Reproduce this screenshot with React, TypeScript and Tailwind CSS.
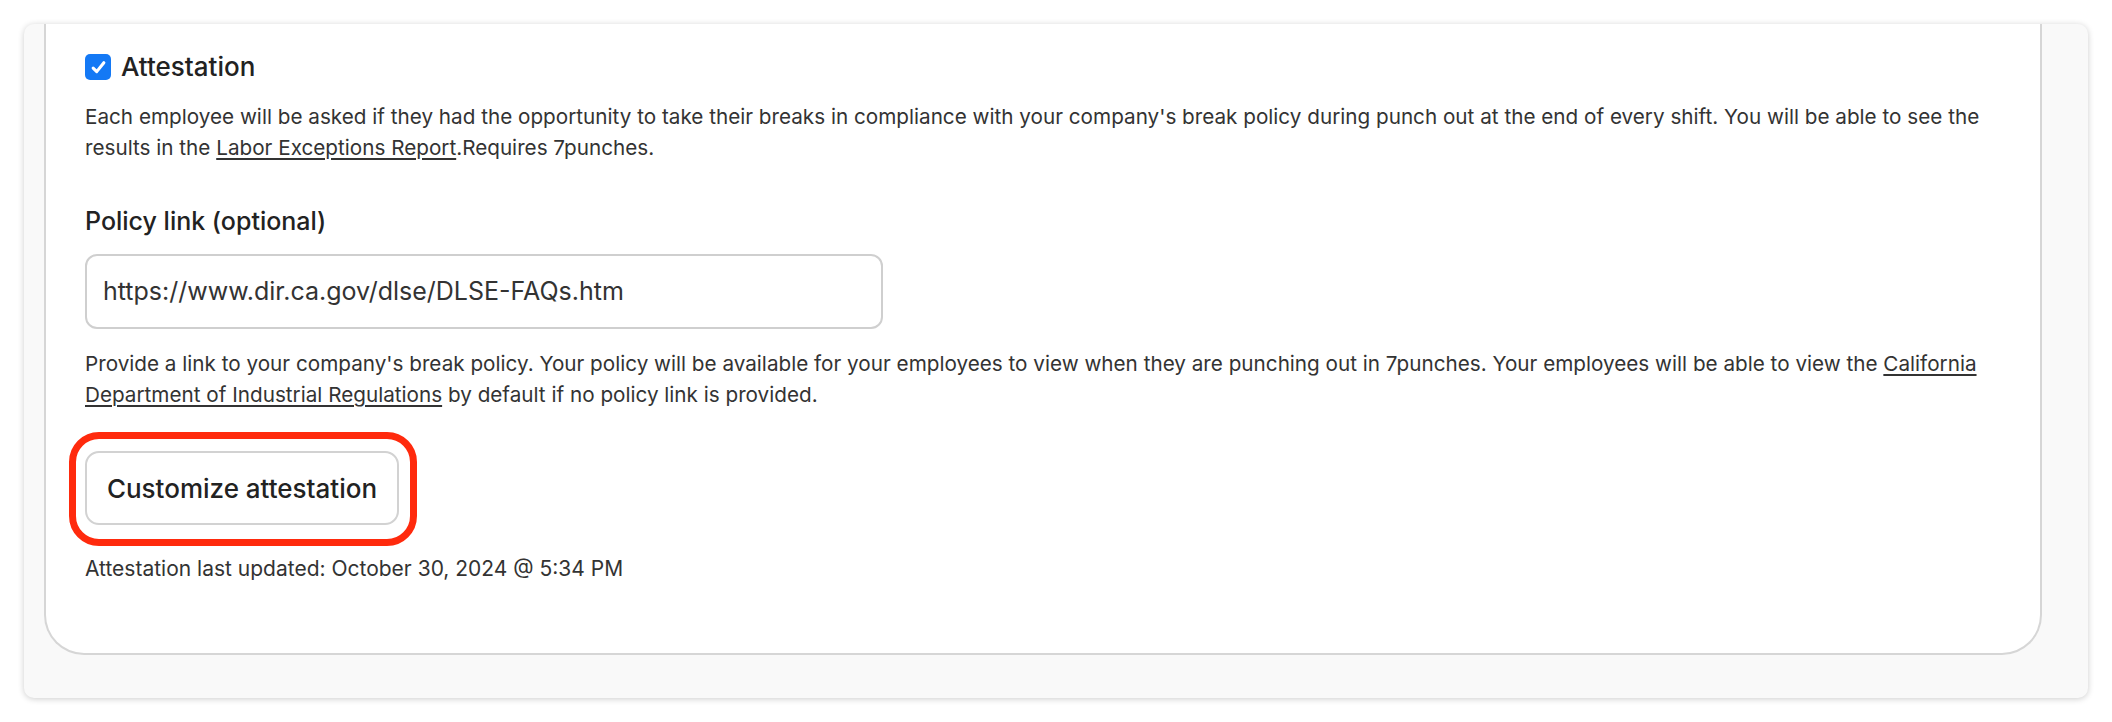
export default function App() {
  return (
    <div className="min-h-screen bg-white pt-[24px] px-[24px] font-['Inter',sans-serif] text-[#333]">
      {/* outer scroll panel, inner card scrolled so its top is hidden */}
      <div className="overflow-hidden rounded-[10px] bg-[#f9f9f9] pl-[20px] pr-[46px] pb-[43px] shadow-[0_1px_6px_rgba(0,0,0,0.2)]">
        <div className="rounded-b-[40px] border-x-2 border-b-2 border-[#d6d6d6] bg-white pt-[27px] pb-[69px] pl-[39px] pr-[39px]">
          {/* Attestation heading */}
          <label className="flex h-[32px] items-center gap-[10px]">
            <span className="flex h-[26px] w-[26px] items-center justify-center rounded-[5px] bg-[#1479f5]">
              <svg viewBox="0 0 16 16" className="h-[19px] w-[19px]" fill="none">
                <path d="M3.5 8.5l3 3 6-7.5" stroke="white" strokeWidth="2.6" strokeLinecap="round" strokeLinejoin="round" />
              </svg>
            </span>
            <span className="text-[26px] font-medium leading-[32px] text-[#222]">Attestation</span>
          </label>

          <p className="mt-[18px] text-[20.7px] leading-[31px]">
            Each employee will be asked if they had the opportunity to take their breaks in compliance with your company's break policy during punch out at the end of every shift. You will be able to see the results in the{" "}
            <a className="underline decoration-[1.5px] underline-offset-[3px]">Labor Exceptions Report</a>.Requires 7punches.
          </p>

          {/* Policy link */}
          <div className="mt-[42px] text-[25px] font-medium leading-[32px] text-[#222]">Policy link (optional)</div>
          <div className="mt-[17px] flex h-[75px] w-[798px] items-center rounded-[12px] border-2 border-[#cfcfcf] px-[16px] text-[25px] text-[#333]">
            https://www.dir.ca.gov/dlse/DLSE-FAQs.htm
          </div>
          <p className="mt-[19px] text-[20.7px] leading-[31px]">
            Provide a link to your company's break policy. Your policy will be available for your employees to view when they are punching out in 7punches. Your employees will be able to view the{" "}
            <a className="underline decoration-[1.5px] underline-offset-[3px]">California Department of Industrial Regulations</a> by default if no policy link is provided.
          </p>

          {/* Customize button with highlight ring */}
          <div className="relative mt-[41px] inline-block">
            <button className="h-[74px] w-[314px] rounded-[14px] border-2 border-[#d2d2d2] bg-white text-[26px] font-medium text-[#222]">
              Customize attestation
            </button>
            <div className="pointer-events-none absolute -left-[16px] -top-[19px] -right-[18px] -bottom-[21px] rounded-[30px] border-[7px] border-[#ff2a0d]" />
          </div>

          <div className="mt-[28px] text-[21px] leading-[31px]">Attestation last updated: October 30, 2024 @ 5:34 PM</div>
        </div>
      </div>
    </div>
  );
}
